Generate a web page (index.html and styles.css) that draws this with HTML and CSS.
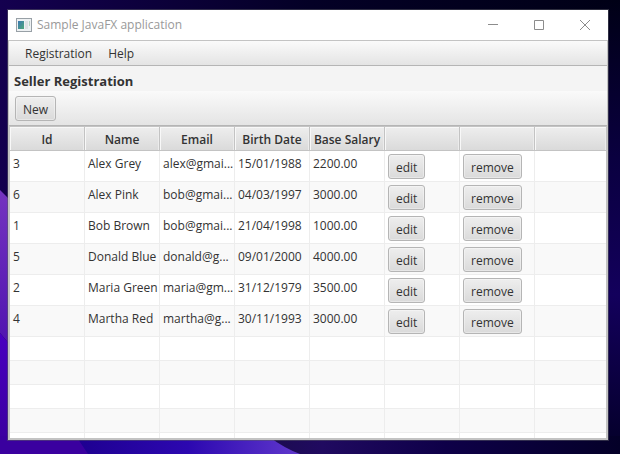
FILE: index.html
```html
<!DOCTYPE html>
<html lang="en">
<head>
<meta charset="utf-8">
<title>Sample JavaFX application</title>
<link rel="stylesheet" href="styles.css">
</head>
<body>
<svg class="wallpaper" viewBox="0 0 620 454" preserveAspectRatio="none" aria-hidden="true">
  <defs>
    <linearGradient id="top" x1="0" x2="1" y1="0" y2="0"><stop offset="0" stop-color="#14004f"/><stop offset=".5" stop-color="#040026"/><stop offset="1" stop-color="#000016"/></linearGradient>
    <linearGradient id="right" x1="0" x2="0" y1="0" y2="1"><stop offset="0" stop-color="#000016"/><stop offset=".35" stop-color="#0a0040"/><stop offset=".65" stop-color="#13005c"/><stop offset="1" stop-color="#040028"/></linearGradient>
    <linearGradient id="left" x1="0" x2="0" y1="0" y2="1"><stop offset="0" stop-color="#7434c0"/><stop offset="1" stop-color="#5014b0"/></linearGradient>
    <linearGradient id="low" x1="0" x2="0" y1="0" y2="1"><stop offset="0" stop-color="#4800c0"/><stop offset="1" stop-color="#3a009c"/></linearGradient>
    <linearGradient id="wave" x1="0" x2="1" y1="0" y2="0"><stop offset="0" stop-color="#1e0090"/><stop offset=".5" stop-color="#2c08b0"/><stop offset="1" stop-color="#6038cc"/></linearGradient>
    <linearGradient id="floor" x1="0" x2="1" y1="0" y2="0"><stop offset="0" stop-color="#1c0c50"/><stop offset=".15" stop-color="#200a60"/><stop offset=".5" stop-color="#0e0048"/><stop offset="1" stop-color="#040028"/></linearGradient>
  </defs>
  <rect width="620" height="454" fill="url(#top)"/>
  <rect x="600" width="20" height="454" fill="url(#right)"/>
  <path d="M0 190L10 200V345L0 333Z" fill="url(#left)"/>
  <path d="M0 333L10 345V454H0Z" fill="url(#low)"/>
  <rect y="436" width="90" height="18" fill="#3a009f"/>
  <rect x="270" y="436" width="350" height="18" fill="url(#floor)"/>
  <path d="M76 436H268Q284 448 300 454H88Z" fill="url(#wave)"/>
</svg>
<div class="window">
  <header class="titlebar">
    <svg class="app-icon" width="16" height="14" viewBox="0 0 16 14" aria-hidden="true">
      <defs><linearGradient id="pane" x1="0" x2="1" y1="0" y2="1"><stop offset="0" stop-color="#3c78b4"/><stop offset="1" stop-color="#4ea878"/></linearGradient></defs>
      <rect x=".5" y=".5" width="15" height="13" fill="#eef1f3" stroke="#98a0a6"/>
      <rect x="2" y="3" width="6" height="8" fill="url(#pane)"/>
      <rect x="9" y="3" width="3" height="8" fill="#dde1e3"/>
      <rect x="13" y="3" width="1" height="5" fill="#b8d4c4"/>
    </svg>
    <span class="caption">Sample JavaFX application</span>
    <div class="controls">
      <button type="button" aria-label="Minimize"><svg width="10" height="10" viewBox="0 0 10 10"><path d="M0 4.5H10"/></svg></button>
      <button type="button" aria-label="Maximize"><svg width="10" height="10" viewBox="0 0 10 10"><path d="M.5 .5H9.500V9.500H.5Z"/></svg></button>
      <button type="button" aria-label="Close"><svg width="10" height="10" viewBox="0 0 10 10"><path d="M0 0L10 10M10 0L0 10"/></svg></button>
    </div>
  </header>
  <main class="client">
    <nav class="menubar"><button type="button">Registration</button><button type="button">Help</button></nav>
    <h1>Seller Registration</h1>
    <div class="toolbar"><button type="button" class="btn">New</button></div>
    <div class="table-view">
      <table>
        <colgroup><col class="c"><col class="c"><col class="c"><col class="c"><col class="c"><col class="c"><col class="c"><col></colgroup>
        <thead><tr><th>Id</th><th>Name</th><th>Email</th><th>Birth Date</th><th>Base Salary</th><th></th><th></th><th></th></tr></thead>
        <tbody>
          <tr><td>3</td><td>Alex Grey</td><td>alex@gmai...</td><td>15/01/1988</td><td>2200.00</td><td class="action"><button type="button" class="btn">edit</button></td><td class="action"><button type="button" class="btn">remove</button></td><td></td></tr>
          <tr><td>6</td><td>Alex Pink</td><td>bob@gmai...</td><td>04/03/1997</td><td>3000.00</td><td class="action"><button type="button" class="btn">edit</button></td><td class="action"><button type="button" class="btn">remove</button></td><td></td></tr>
          <tr><td>1</td><td>Bob Brown</td><td>bob@gmai...</td><td>21/04/1998</td><td>1000.00</td><td class="action"><button type="button" class="btn">edit</button></td><td class="action"><button type="button" class="btn">remove</button></td><td></td></tr>
          <tr><td>5</td><td>Donald Blue</td><td>donald@g...</td><td>09/01/2000</td><td>4000.00</td><td class="action"><button type="button" class="btn">edit</button></td><td class="action"><button type="button" class="btn">remove</button></td><td></td></tr>
          <tr><td>2</td><td>Maria Green</td><td>maria@gm...</td><td>31/12/1979</td><td>3500.00</td><td class="action"><button type="button" class="btn">edit</button></td><td class="action"><button type="button" class="btn">remove</button></td><td></td></tr>
          <tr><td>4</td><td>Martha Red</td><td>martha@g...</td><td>30/11/1993</td><td>3000.00</td><td class="action"><button type="button" class="btn">edit</button></td><td class="action"><button type="button" class="btn">remove</button></td><td></td></tr>
          <tr class="empty"><td></td><td></td><td></td><td></td><td></td><td></td><td></td><td></td></tr>
          <tr class="empty"><td></td><td></td><td></td><td></td><td></td><td></td><td></td><td></td></tr>
          <tr class="empty"><td></td><td></td><td></td><td></td><td></td><td></td><td></td><td></td></tr>
          <tr class="empty"><td></td><td></td><td></td><td></td><td></td><td></td><td></td><td></td></tr>
          <tr class="empty"><td></td><td></td><td></td><td></td><td></td><td></td><td></td><td></td></tr>
        </tbody>
      </table>
    </div>
  </main>
</div>
</body>
</html>
```
FILE: styles.css
```css
* { box-sizing: border-box; }

body {
  margin: 0;
  height: 100vh;
  padding: 9px 11px 13px 7px;
  display: flex;
  overflow: hidden;
  background: #0a0038;
  color: #333;
  font: 12px/16px "Open Sans", "Noto Sans", sans-serif;
}

button { font: inherit; color: inherit; margin: 0; }

.wallpaper { position: fixed; inset: 0; width: 100%; height: 100%; z-index: -1; }

.window {
  flex: 1;
  min-width: 0;
  display: flex;
  flex-direction: column;
  border: 1px solid rgba(90, 90, 100, .5);
  background: #fff;
  background-clip: padding-box;
}

.titlebar { display: flex; align-items: center; height: 30px; padding-left: 8px; color: #999; }
.app-icon { margin-right: 5px; }
.caption { flex: 1; }
.controls { display: flex; }
.controls button { width: 46px; height: 28px; padding: 0; border: 0; background: none; display: flex; align-items: center; justify-content: center; }
.controls path { fill: none; stroke: #8c8c8c; }

.client {
  flex: 1;
  min-height: 0;
  display: flex;
  flex-direction: column;
  border: 1px solid #c3c3c3;
  background: #f4f4f4;
}

.menubar {
  display: flex;
  height: 25px;
  padding: 0 8px;
  background: linear-gradient(#fafafa, #e4e4e4);
  border-bottom: 1px solid #b5b5b5;
}
.menubar button { border: 0; background: none; padding: 2px 8px 0; }

h1 { margin: 0; padding: 5px 5px 0; font-size: 13px; line-height: 20px; font-weight: 700; }

.toolbar {
  height: 35px;
  padding: 5px 6px;
  background: linear-gradient(#fafafa, #e4e4e4);
  border-bottom: 1px solid #b5b5b5;
}

.btn {
  display: block;
  height: 25px;
  padding: 2px 7px 0;
  border: 1px solid #b5b5b5;
  border-radius: 3px;
  background: linear-gradient(#eee, #dadada);
  box-shadow: inset 0 0 0 1px rgba(255, 255, 255, .35);
}

.table-view {
  flex: 1;
  min-height: 0;
  overflow: hidden;
  background: #fff;
  border: 1px solid #c3c3c3;
}

table { width: 100%; table-layout: fixed; border-collapse: separate; border-spacing: 0; }
.c { width: 75px; }

th {
  height: 24px;
  padding: 2px 0 0;
  font-weight: 600;
  text-align: center;
  background: linear-gradient(#eee, #dadada);
  border-right: 1px solid #c3c3c3;
  border-bottom: 1px solid #c3c3c3;
  box-shadow: inset 1px 1px 0 #f8f8f8, inset -1px 0 0 #ececec;
}

td {
  height: 31px;
  padding: 5px 3px 2px;
  vertical-align: top;
  white-space: nowrap;
  overflow: hidden;
  border-right: 1px solid #ededed;
  border-bottom: 1px solid #ededed;
}
th:last-child, td:last-child { border-right: 0; }
tr:nth-child(even) td { background: #f9f9f9; }
.action { padding-top: 3px; }
.empty td { height: 24px; padding: 0; }
```
